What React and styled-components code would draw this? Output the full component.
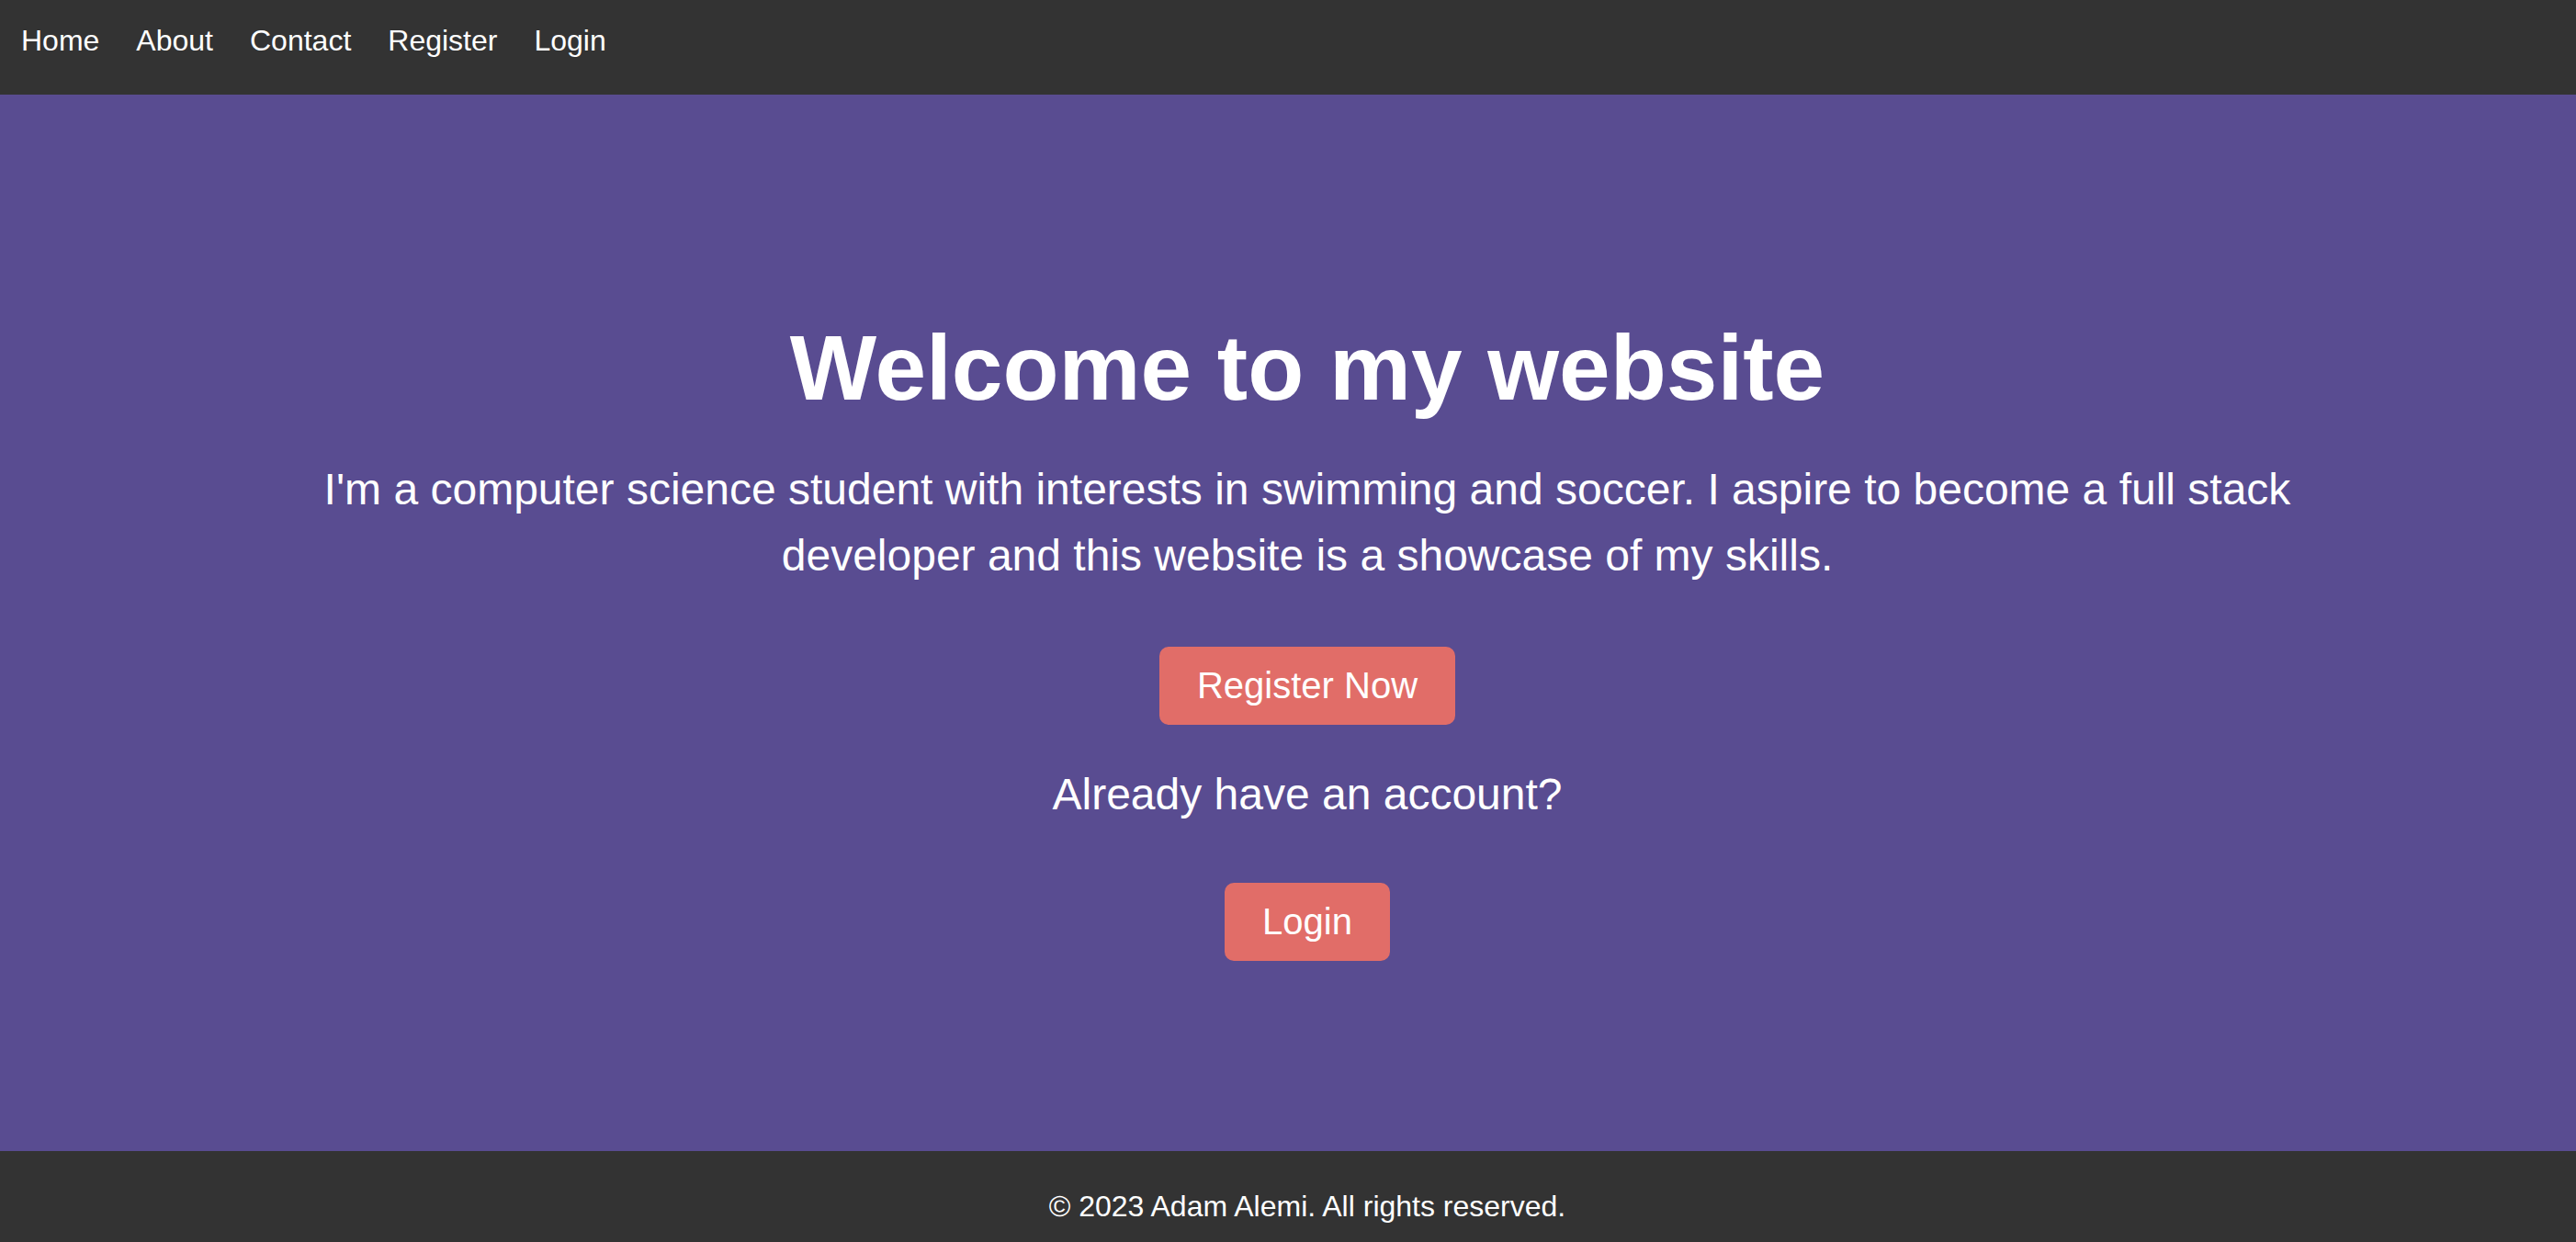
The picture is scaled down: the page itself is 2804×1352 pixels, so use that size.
import React from 'react'
import styled, { createGlobalStyle } from 'styled-components'

const GlobalStyle = createGlobalStyle`
  html, body {
    margin: 0;
    padding: 0;
  }
  body {
    font-family: "Liberation Sans", Arial, sans-serif;
    background-color: #333333;
    color: #ffffff;
  }
  * {
    box-sizing: border-box;
  }
`

const Page = styled.div`
  display: flex;
  flex-direction: column;
  height: 1352px;
`

const Navbar = styled.nav`
  height: 103px;
  background-color: #333333;
  display: flex;
  align-items: flex-start;
  padding: 26px 0 0 23px;
`

const NavList = styled.ul`
  display: flex;
  gap: 40px;
  list-style: none;
  margin: 0;
  padding: 0;
`

const NavLink = styled.a`
  font-size: 32px;
  color: #ffffff;
  text-decoration: none;
`

const Hero = styled.main`
  flex: 1;
  background-color: #594c91;
  display: flex;
  flex-direction: column;
  align-items: center;
  text-align: center;
  padding: 240px 0 0 42px;
`

const Title = styled.h1`
  font-size: 100px;
  font-weight: bold;
  line-height: 115px;
  margin: 0 0 39px;
`

const Intro = styled.p`
  font-size: 48px;
  line-height: 72px;
  max-width: 2250px;
  margin: 0 0 63px;
`

const Button = styled.a`
  display: inline-block;
  background-color: #e16d68;
  color: #ffffff;
  font-size: 40px;
  line-height: 46px;
  padding: 19px 41px 20px;
  border-radius: 10px;
  text-decoration: none;
  margin-bottom: ${(p) => p.$gap || 0}px;
`

const Question = styled.p`
  font-size: 48px;
  line-height: 55px;
  margin: 0 0 69px;
`

const Footer = styled.footer`
  height: 99px;
  background-color: #333333;
  text-align: center;
  padding: 42px 0 0 42px;
  font-size: 32px;
`

const links = ['Home', 'About', 'Contact', 'Register', 'Login']

export default function App() {
  return (
    <>
      <GlobalStyle />
      <Page>
        <Navbar>
          <NavList>
            {links.map((l) => (
              <li key={l}>
                <NavLink href="#">{l}</NavLink>
              </li>
            ))}
          </NavList>
        </Navbar>
        <Hero>
          <Title>Welcome to my website</Title>
          <Intro>
            I'm a computer science student with interests in swimming and soccer. I aspire to
            become a full stack developer and this website is a showcase of my skills.
          </Intro>
          <Button href="#" $gap={48}>Register Now</Button>
          <Question>Already have an account?</Question>
          <Button href="#">Login</Button>
        </Hero>
        <Footer>© 2023 Adam Alemi. All rights reserved.</Footer>
      </Page>
    </>
  )
}
